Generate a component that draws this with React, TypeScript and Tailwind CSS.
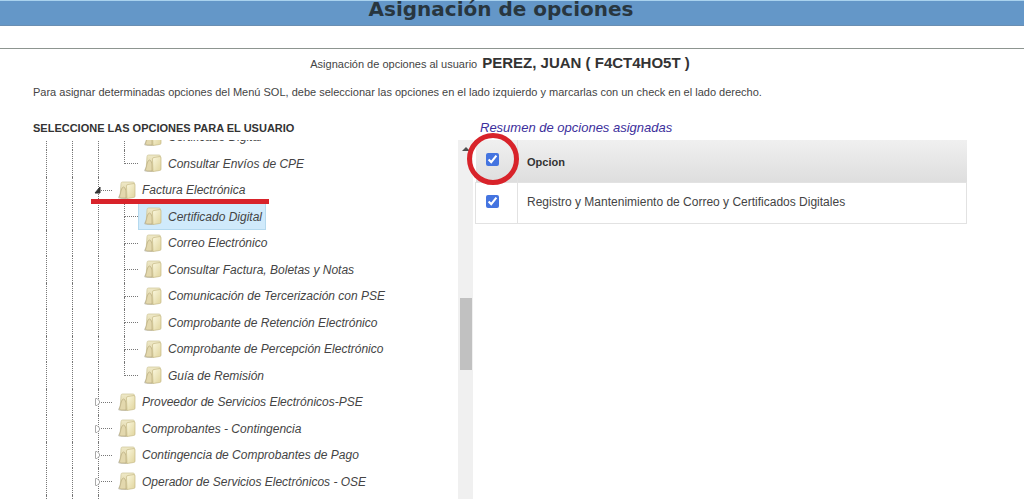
import React, { useState } from 'react';

type TreeNode = {
  id: number;
  label: string;
  level: 'GROUP' | 'LEAF';
  open?: boolean;
  last?: boolean;
};

const TREE: TreeNode[] = [
  { id: 1, label: 'Certificado Digital', level: 'LEAF' },
  { id: 2, label: 'Consultar Envíos de CPE', level: 'LEAF', last: true },
  { id: 3, label: 'Factura Electrónica', level: 'GROUP', open: true },
  { id: 4, label: 'Certificado Digital', level: 'LEAF' },
  { id: 5, label: 'Correo Electrónico', level: 'LEAF' },
  { id: 6, label: 'Consultar Factura, Boletas y Notas', level: 'LEAF' },
  { id: 7, label: 'Comunicación de Tercerización con PSE', level: 'LEAF' },
  { id: 8, label: 'Comprobante de Retención Electrónico', level: 'LEAF' },
  { id: 9, label: 'Comprobante de Percepción Electrónico', level: 'LEAF' },
  { id: 10, label: 'Guía de Remisión', level: 'LEAF', last: true },
  { id: 11, label: 'Proveedor de Servicios Electrónicos-PSE', level: 'GROUP' },
  { id: 12, label: 'Comprobantes - Contingencia', level: 'GROUP' },
  { id: 13, label: 'Contingencia de Comprobantes de Pago', level: 'GROUP' },
  { id: 14, label: 'Operador de Servicios Electrónicos - OSE', level: 'GROUP' }
];

const OPTIONS = ['Registro y Mantenimiento de Correo y Certificados Digitales'];

const FolderIcon: React.FC = () => (
  <svg width="18" height="19" viewBox="0 0 18 19" className="shrink-0" aria-hidden="true">
    <defs>
      <linearGradient id="folderBack" x1="0" y1="0" x2="0" y2="1">
        <stop offset="0" stopColor="#efe9c8" />
        <stop offset="1" stopColor="#d9cd9b" />
      </linearGradient>
      <linearGradient id="folderFront" x1="0" y1="0" x2="1" y2="1">
        <stop offset="0" stopColor="#fbf8df" />
        <stop offset="1" stopColor="#e0d49c" />
      </linearGradient>
    </defs>
    <path d="M0 16.500 L2.500 12 L3 16 L9 16.500 L9 18 L1 17.500Z" fill="#b5b2a2" opacity="0.7" />
    <path d="M3 2.500 Q3 1 4.500 1 L15 1 Q16.500 1 16.500 2.500 L16.500 14 L9 17 L2 16.500Z" fill="url(#folderBack)" stroke="#cdc496" strokeWidth="0.700" />
    <path d="M1.500 16 L3 10 L4 7 Q5.500 5 7 7 L8 10 L8 17 L2.500 17Z" fill="#e3d8ad" stroke="#b3a67a" strokeWidth="0.600" />
    <path d="M8.500 5 Q8.500 3.500 10 3.500 L16 2.500 Q17 2.500 17 4 L17 15 Q17 16.500 15.500 16.500 L9 17.500Z" fill="url(#folderFront)" stroke="#c5b985" strokeWidth="0.700" />
  </svg>
);

const Guide: React.FC = () => (
  <span className="w-[26px] shrink-0 self-stretch border-l border-dotted border-[#777]"></span>
);

const Toggle: React.FC<{ open?: boolean }> = ({ open }) => (
  <svg width="8" height="10" viewBox="0 0 8 10" className="absolute top-1/2 -left-1 -translate-y-1/2" aria-hidden="true">
    {open ? (
      <path d="M6 2 L6 8 L1 8Z" fill="#333" stroke="#333" />
    ) : (
      <path d="M1.500 1.500 L3 1.500 L5.500 4 L5.500 6 L3 8.500 L1.500 8.500Z" fill="#fff" stroke="#aaa" />
    )}
  </svg>
);

const TreeRow: React.FC<{ node: TreeNode; selected: boolean; onSelect: () => void }> = ({ node, selected, onSelect }) => {
  const leaf = node.level === 'LEAF';
  return (
    <li className="relative flex odd:h-[26px] even:h-[27px] shrink-0 items-center">
      <Guide />
      <Guide />
      {leaf && <Guide />}
      <span className="relative flex w-[14px] shrink-0 flex-col self-stretch">
        <span className="flex-1 border-b border-l border-dotted border-[#777]"></span>
        <span className={`flex-1 border-dotted border-[#777] ${node.last ? '' : 'border-l'}`}></span>
        {!leaf && <Toggle open={node.open} />}
      </span>
      <button
        type="button"
        onClick={onSelect}
        className={`flex h-full items-center gap-[6px] border pr-[3px] pl-[5px] text-[12px] leading-4 whitespace-nowrap italic ${selected ? 'border-[#b5d9ee] bg-[#d0eafb]' : 'border-transparent'}`}
      >
        <FolderIcon />
        {node.label}
      </button>
      {node.open && <span className="absolute -bottom-px left-[45px] z-10 h-[5px] w-[178px] bg-[#d8232a]"></span>}
    </li>
  );
};

const App: React.FC = () => {
  const [selectedId, setSelectedId] = useState(4);
  const [checked, setChecked] = useState<boolean[]>(OPTIONS.map(() => true));

  const allChecked = checked.every(c => c);

  return (
    <div className="flex h-screen flex-col overflow-hidden bg-white font-['Liberation_Sans',Arial,sans-serif] text-[#444]">
      <header className="flex h-[26px] shrink-0 items-start justify-center border-t border-b border-t-[#a9d2ee] border-b-[#6a8fb3] bg-[#6497c8]">
        <h1 className="pr-[22px] font-['DejaVu_Sans',Verdana,sans-serif] text-[20px] leading-4 font-bold text-[#28363f]">Asignación de opciones</h1>
      </header>
      <hr className="mt-[22px] shrink-0 border-[#8d9590]" />

      <p className="mt-[2px] flex shrink-0 items-baseline justify-center gap-[5px] pr-[24px] leading-6">
        <span className="text-[11px]">Asignación de opciones al usuario</span>
        <strong className="text-[15px] text-[#333]">PEREZ, JUAN ( F4CT4HO5T )</strong>
      </p>
      <p className="mt-1 shrink-0 pl-[33px] text-[11px] leading-6">
        Para asignar determinadas opciones del Menú SOL, debe seleccionar las opciones en el lado izquierdo y marcarlas con un check en el lado derecho.
      </p>

      <main className="mt-3 flex min-h-0 flex-1 pr-[57px]">
        <section className="flex w-[473px] shrink-0 flex-col">
          <h2 className="h-6 shrink-0 pl-[33px] text-[11px] leading-6 font-bold text-[#333]">SELECCIONE LAS OPCIONES PARA EL USUARIO</h2>
          <div className="flex min-h-0 flex-1">
            <div className="flex flex-1 flex-col overflow-hidden pl-[46px]">
              <ul className="-mt-4 flex shrink-0 flex-col">
                {TREE.map(node => (
                  <TreeRow key={node.id} node={node} selected={node.id === selectedId} onSelect={() => setSelectedId(node.id)} />
                ))}
              </ul>
              <div className="flex flex-1">
                <Guide />
                <Guide />
                <Guide />
              </div>
            </div>
            <div className="flex w-[15px] flex-col items-center bg-[#f0f0f0]">
              <svg width="8" height="4" viewBox="0 0 8 4" className="mt-[7px]" aria-hidden="true">
                <path d="M0 4 L4 0 L8 4Z" fill="#505050" />
              </svg>
              <span className="mt-[147px] h-[72px] w-3 bg-[#c1c1c1]"></span>
            </div>
          </div>
        </section>

        <section className="ml-0.5 flex-1">
          <h2 className="h-6 pl-[5px] text-[13px] leading-6 text-[#3c2f9c] italic">Resumen de opciones asignadas</h2>
          <table className="w-full border-collapse text-left">
            <thead>
              <tr className="h-[42px] bg-linear-to-b from-[#f0f0f0] to-[#dedede]">
                <th className="w-[42px] border-r border-[#e2e2e2] pl-[10px]">
                  <span className="relative flex w-[13px]">
                    <input
                      type="checkbox"
                      aria-label="Seleccionar todas"
                      className="mb-0.5 size-[13px] accent-[#4474e0]"
                      checked={allChecked}
                      onChange={e => setChecked(OPTIONS.map(() => e.target.checked))}
                    />
                    <span className="pointer-events-none absolute -top-[20px] -left-[19px] size-[52px] rounded-full border-5 border-[#d8232a]"></span>
                  </span>
                </th>
                <th className="pt-[3px] pl-[9px] text-[11px] leading-4 font-bold text-[#333]">Opcion</th>
              </tr>
            </thead>
            <tbody>
              {OPTIONS.map((option, i) => (
                <tr key={option} className="h-[41px]">
                  <td className="border border-[#e2e2e2] pb-0.5 pl-[10px]">
                    <input
                      id={`option-${i}`}
                      type="checkbox"
                      className="block size-[13px] accent-[#4474e0]"
                      checked={checked[i]}
                      onChange={e => setChecked(checked.map((c, n) => (n === i ? e.target.checked : c)))}
                    />
                  </td>
                  <td className="border border-[#e2e2e2] pb-0.5 pl-[9px] text-[12px] leading-4">
                    <label htmlFor={`option-${i}`}>{option}</label>
                  </td>
                </tr>
              ))}
            </tbody>
          </table>
        </section>
      </main>
    </div>
  );
};

export default App;
